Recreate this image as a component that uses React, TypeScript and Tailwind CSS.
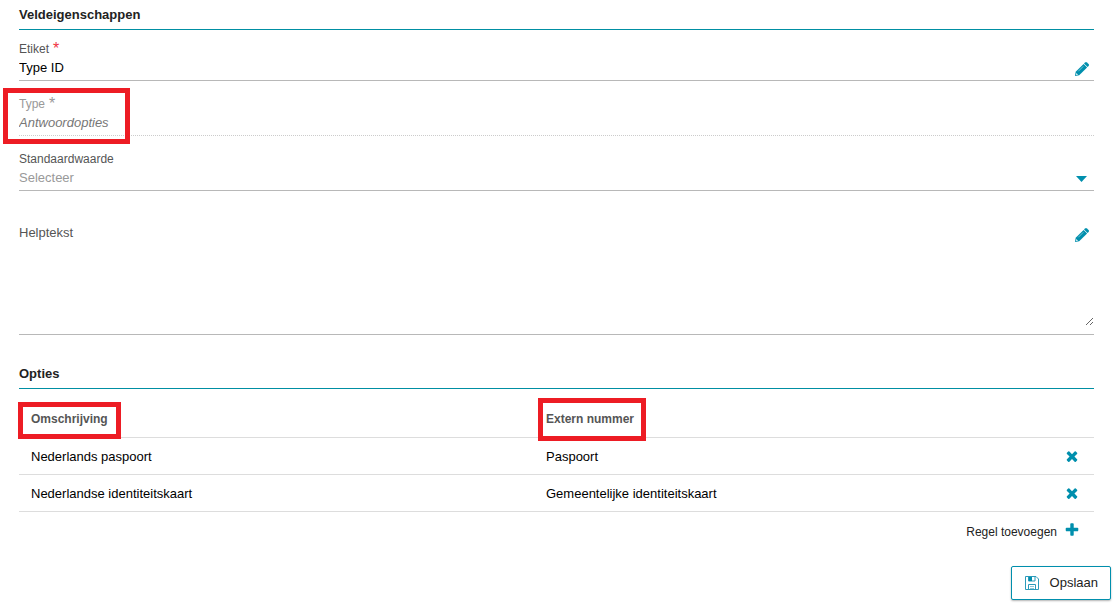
import { useState } from "react";
import type { ReactNode } from "react";

interface OptionRow {
  id: number;
  description: string;
  externalNumber: string;
}

const initialRows: OptionRow[] = [
  { id: 1, description: "Nederlands paspoort", externalNumber: "Paspoort" },
  { id: 2, description: "Nederlandse identiteitskaart", externalNumber: "Gemeentelijke identiteitskaart" },
];

const PencilIcon = () => (
  <svg viewBox="0 0 14 14" className="size-[14px] fill-[#008fad]" aria-hidden="true">
    <path d="M0 14l.7-4.200L8.600 1.900l3.500 3.500L4.200 13.300z" />
    <path d="M9 1.500L10.100.4q.9-.8 1.800 0l1.700 1.700q.8.900 0 1.800l-1.100 1.100z" />
    <path d="M3.300 9.300L8.300 4.300" stroke="#8fd0df" strokeWidth=".8" />
    <path d="M1.300 10.900l1.800 1.800-1.700.3-.4-.4z" fill="#e6f5f8" />
  </svg>
);

const CrossIcon = () => (
  <svg viewBox="0 0 1792 1792" className="size-4 fill-[#008fad]" aria-hidden="true">
    <path d="M1490 1322q0 40-28 68l-136 136q-28 28-68 28t-68-28l-294-294-294 294q-28 28-68 28t-68-28l-136-136q-28-28-28-68t28-68l294-294-294-294q-28-28-28-68t28-68l136-136q28-28 68-28t68 28l294 294 294-294q28-28 68-28t68 28l136 136q28 28 28 68t-28 68l-294 294 294 294q28 28 28 68z" />
  </svg>
);

const PlusIcon = () => (
  <svg viewBox="0 0 1792 1792" className="size-4 fill-[#008fad]" aria-hidden="true">
    <path d="M1600 736v192q0 40-28 68t-68 28h-416v416q0 40-28 68t-68 28h-192q-40 0-68-28t-28-68v-416h-416q-40 0-68-28t-28-68v-192q0-40 28-68t68-28h416v-416q0-40 28-68t68-28h192q40 0 68 28t28 68v416h416q40 0 68 28t28 68z" />
  </svg>
);

const SaveIcon = () => (
  <svg viewBox="0 0 14 14" className="size-[14px]" fill="none" aria-hidden="true">
    <path d="M.5.5h10.5l2.500 2.500v10.500H.5z" stroke="#2b9aba" />
    <path d="M3.500.5h6.500V5H3.500z" stroke="#2b9aba" />
    <path d="M4 1h3v4H4z" fill="#008fad" />
    <path d="M3.500 13.500v-5h7v5" stroke="#2b9aba" />
    <path d="M5 10.500h4M5 12.500h4" stroke="#8cc8d9" />
  </svg>
);

const SectionTitle = ({ children }: { children: ReactNode }) => (
  <h2 className="h-[30px] border-b border-[#008fa3] pt-[5px] text-[13px] leading-5 font-bold text-[#222]">{children}</h2>
);

const Highlight = ({ className }: { className: string }) => (
  <span className={`pointer-events-none absolute border-5 border-[#ed1c24] ${className}`} />
);

export default function App() {
  const [rows, setRows] = useState<OptionRow[]>(initialRows);

  const addRow = () => setRows([...rows, { id: Date.now(), description: "", externalNumber: "" }]);
  const removeRow = (id: number) => setRows(rows.filter((row) => row.id !== id));

  const labelClass = "flex h-4 gap-1 text-[12px] leading-4";
  const fieldClass = "border-b pt-[11px] pb-px";
  const inputClass = "h-[22px] min-w-0 flex-1 bg-transparent text-[13px] leading-[22px] outline-none";

  return (
    <form
      className="bg-white font-['Liberation_Sans',Arial,sans-serif] text-[13px] text-black"
      onSubmit={(e) => e.preventDefault()}
    >
      <div className="pr-[26px] pl-[19px]">
        <section>
          <SectionTitle>Veldeigenschappen</SectionTitle>
          <div className="flex flex-col gap-1">
            <div className={`${fieldClass} border-[#b8b8b8]`}>
              <label htmlFor="label" className={`${labelClass} text-[#555]`}>
                Etiket <span className="text-[16px] text-[#f0353f]">*</span>
              </label>
              <div className="flex items-center">
                <input id="label" defaultValue="Type ID" className={inputClass} />
                <button type="button" aria-label="Etiket bewerken" className="mt-[2px] mr-[5px]">
                  <PencilIcon />
                </button>
              </div>
            </div>

            <div className={`${fieldClass} relative border-dotted border-[#ccc]`}>
              <label htmlFor="type" className={`${labelClass} text-[#999]`}>
                Type <span className="text-[16px]">*</span>
              </label>
              <div className="flex items-center">
                <input id="type" value="Antwoordopties" readOnly className={`${inputClass} text-[#777] italic`} />
              </div>
              <Highlight className="top-[3px] -left-4 h-14 w-[127px]" />
            </div>

            <div className={`${fieldClass} border-[#b8b8b8]`}>
              <label htmlFor="default" className={`${labelClass} text-[#555]`}>Standaardwaarde</label>
              <div className="flex items-center">
                <select id="default" defaultValue="" className={`${inputClass} appearance-none text-[#999]`}>
                  <option value="">Selecteer</option>
                  {rows.map((row) => (
                    <option key={row.id} value={row.id}>{row.description}</option>
                  ))}
                </select>
                <svg viewBox="0 0 11 6" className="pointer-events-none mt-[2px] mr-[7px] h-[6px] w-[11px] fill-[#008fad]" aria-hidden="true">
                  <path d="M0 0h11L5.500 6z" />
                </svg>
              </div>
            </div>
          </div>

          <div className="mt-8 border-b border-[#b8b8b8] pb-2">
            <div className="flex h-5 items-start justify-between">
              <label htmlFor="help" className="text-[13px] leading-5 text-[#555]">Helptekst</label>
              <button type="button" aria-label="Helptekst bewerken" className="mt-[5px] mr-[5px]">
                <PencilIcon />
              </button>
            </div>
            <textarea id="help" className="block h-[83px] w-full resize-y bg-transparent text-[13px] outline-none" />
          </div>
        </section>

        <section className="mt-6">
          <SectionTitle>Opties</SectionTitle>
          <table className="mt-[11px] w-full table-fixed border-collapse">
            <thead>
              <tr className="h-[37px] border-b border-[#ddd] text-left text-[12px] text-[#555]">
                <th className="relative px-3 pt-px">
                  Omschrijving
                  <Highlight className="top-[2px] -left-px h-[37px] w-[103px]" />
                </th>
                <th className="relative px-3 pt-px">
                  Extern nummer
                  <Highlight className="-top-[2px] left-1 h-[43px] w-[108px]" />
                </th>
                <th className="w-[45px]" />
              </tr>
            </thead>
            <tbody>
              {rows.map((row) => (
                <tr key={row.id} className="h-[37px] border-b border-[#ddd]">
                  <td className="px-3 pt-[2px]">{row.description}</td>
                  <td className="px-3 pt-[2px]">{row.externalNumber}</td>
                  <td className="pt-px">
                    <button
                      type="button"
                      aria-label="Regel verwijderen"
                      className="mx-auto block"
                      onClick={() => removeRow(row.id)}
                    >
                      <CrossIcon />
                    </button>
                  </td>
                </tr>
              ))}
            </tbody>
          </table>
          <div className="flex justify-end pt-[10px] pr-[14px]">
            <button type="button" className="flex gap-[7px] text-[12px] leading-5 text-[#222]" onClick={addRow}>
              Regel toevoegen
              <PlusIcon />
            </button>
          </div>
        </section>
      </div>

      <div className="flex justify-end pt-6 pr-[9px] pb-[14px]">
        <button
          type="submit"
          className="flex h-[34px] items-center gap-[11px] rounded-xs border border-[#008fad] bg-white pr-3 pl-[13px] text-[13px] text-[#222] shadow-[0_1px_2px_rgba(0,0,0,0.3)]"
        >
          <SaveIcon />
          Opslaan
        </button>
      </div>
    </form>
  );
}
